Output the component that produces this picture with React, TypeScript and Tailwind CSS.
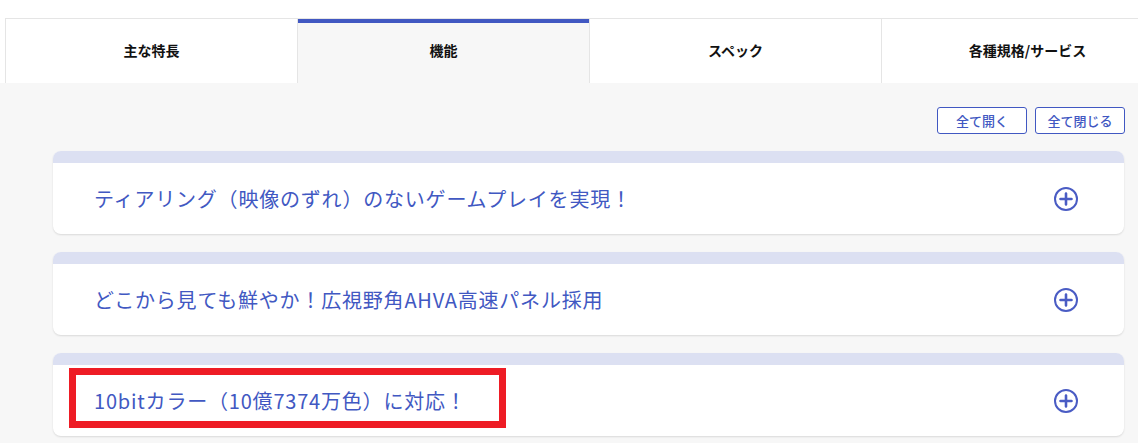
import React from 'react';

const tabs = ['主な特長', '機能', 'スペック', '各種規格/サービス'];

const items = [
  'ティアリング（映像のずれ）のないゲームプレイを実現！',
  'どこから見ても鮮やか！広視野角AHVA高速パネル採用',
  '10bitカラー（10億7374万色）に対応！',
];

const PlusIcon = () => (
  <svg width="26" height="26" viewBox="0 0 26 26" fill="none">
    <circle cx="13" cy="13" r="11" stroke="#4a5cc4" strokeWidth="2" />
    <path d="M13 7.5v11M7.5 13h11" stroke="#4a5cc4" strokeWidth="2.6" strokeLinecap="round" />
  </svg>
);

const App = () => {
  return (
    <div
      className="w-[1138px] h-[443px] overflow-hidden bg-white"
      style={{ fontFamily: '"Noto Sans CJK JP", "Noto Sans", sans-serif' }}
    >
      <div className="pt-[18px] pl-[5px]">
        <div className="flex h-[65px] border-t border-l border-[#e5e5e5] overflow-hidden">
          {tabs.map((t, i) => (
            <div
              key={t}
              className={
                i === 1
                  ? 'relative w-[292px] shrink-0 flex items-center justify-center pb-[2px] bg-[#f7f7f7] border-r border-[#e5e5e5] text-[14px] font-bold text-[#111]'
                  : 'w-[292px] shrink-0 flex items-center justify-center pb-[2px] bg-white border-r border-[#e5e5e5] text-[14px] font-bold text-[#111]'
              }
            >
              {i === 1 && <div className="absolute left-0 right-0 top-0 h-[4px] bg-[#4158c2]" />}
              {t}
            </div>
          ))}
        </div>
      </div>

      <div className="bg-[#f7f7f7] pt-[24px] pb-10">
        <div className="flex justify-end gap-2 pr-[13px]">
          <button className="w-[90px] h-[27px] border border-[#4158c2] rounded-[3px] bg-white text-[13px] font-medium text-[#4158c2]">
            全て開く
          </button>
          <button className="w-[90px] h-[27px] border border-[#4158c2] rounded-[3px] bg-white text-[13px] font-medium text-[#4158c2]">
            全て閉じる
          </button>
        </div>

        <div className="mt-[17px] ml-[53px] mr-[14px] flex flex-col gap-[18px]">
          {items.map((text, i) => (
            <div
              key={text}
              className="relative rounded-[8px] overflow-hidden bg-white shadow-[0_1px_2px_rgba(0,0,0,0.12)]"
            >
              <div className="h-[12px] bg-[#dce0f2]" />
              <div className="h-[71px] flex items-center justify-between pl-[41px] pr-[45px]">
                <span className="text-[20px] text-[#4158c2] tracking-[0.8px]">{text}</span>
                <PlusIcon />
              </div>
              {i === 2 && (
                <div className="absolute left-[16px] top-[15px] w-[437px] h-[60px] border-[7px] border-[#ee1c25]" />
              )}
            </div>
          ))}
        </div>
      </div>
    </div>
  );
};

export default App;
